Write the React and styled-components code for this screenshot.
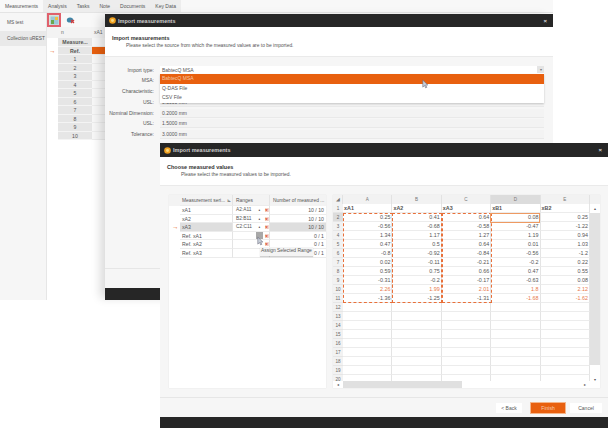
import React from 'react';
import styled, { createGlobalStyle } from 'styled-components';

const GlobalStyle = createGlobalStyle`
  html, body {
    margin: 0;
    padding: 0;
    background: #fff;
  }
  body {
    width: 608px;
    height: 428px;
    overflow: hidden;
    font-family: "Liberation Sans", Arial, sans-serif;
    color: #444;
  }
`;

const orange = '#e8600f';

const Desktop = styled.div`
  position: relative;
  width: 608px;
  height: 428px;
  overflow: hidden;
  background: #fff;
`;

/* ---------- main window ---------- */

const MainWindow = styled.div`
  position: absolute;
  left: 0;
  top: 0;
  width: 553px;
  height: 300px;
  display: flex;
  flex-direction: column;
  background: #f6f6f6;
`;

const TabBar = styled.div`
  height: 13px;
  flex: none;
  display: flex;
  background: #f8f8f8;
  border-bottom: 1px solid #e4e4e4;
  box-sizing: border-box;
`;

const TabGroup = styled.div`
  display: flex;
  background: #ededed;
`;

const Tab = styled.div`
  padding: 0 5px;
  font-size: 5px;
  line-height: 13px;
  color: #555;
  background: ${p => (p.$active ? '#f8f8f8' : 'transparent')};
  white-space: nowrap;
`;

const MainBody = styled.div`
  flex: 1;
  display: flex;
  min-height: 0;
`;

const Sidebar = styled.div`
  width: 46px;
  flex: none;
  padding-top: 2px;
  background: #f6f6f6;
  border-right: 1px solid #e6e6e6;
`;

const SideItem = styled.div`
  height: 15px;
  padding-left: 7px;
  font-size: 4.8px;
  line-height: 15px;
  color: #555;
  white-space: nowrap;
  background: ${p => (p.$active ? '#e9e9e9' : 'transparent')};
`;

const SideGap = styled.div`
  height: 1px;
`;

const Content = styled.div`
  flex: 1;
  display: flex;
  flex-direction: column;
  background: #fff;
`;

const ToolBar = styled.div`
  height: 14px;
  flex: none;
  display: flex;
  align-items: center;
  gap: 3px;
  background: #f8f8f8;
`;

const ToolButton = styled.div`
  width: 14px;
  height: 14px;
  display: flex;
  align-items: center;
  justify-content: center;
  box-sizing: border-box;
  border: ${p => (p.$marked ? '2px solid #e0606c' : '2px solid transparent')};
  background: ${p => (p.$marked ? '#d8e4dc' : 'transparent')};
`;

const SheetHead = styled.div`
  display: flex;
  height: 11px;
  padding-left: 14px;
  font-size: 5px;
  line-height: 11px;
  color: #666;
  background: #f3f3f3;
`;

const SheetCol = styled.div`
  width: ${p => p.$w}px;
  flex: none;
`;

const MiniTable = styled.div`
  display: flex;
  flex-direction: column;
  margin-left: 11px;
`;

const MiniRow = styled.div`
  display: flex;
  height: 8.5px;
  font-size: 5.2px;
  line-height: 8.5px;
  position: relative;
`;

const MiniLabel = styled.div`
  width: 34px;
  flex: none;
  text-align: center;
  font-weight: ${p => (p.$bold ? 700 : 400)};
  background: #e6e6e6;
  color: #555;
  border-bottom: 1px solid #f4f4f4;
  box-sizing: border-box;
`;

const MiniCell = styled.div`
  flex: 1;
  background: ${p => (p.$hot ? orange : '#f7f7f7')};
  border-bottom: 1px solid #ececec;
  box-sizing: border-box;
`;

const RowArrow = styled.span`
  position: absolute;
  left: ${p => p.$left}px;
  top: 50%;
  transform: translateY(-50%);
  font-size: 6.5px;
  font-weight: 700;
  line-height: 6px;
  color: ${orange};
`;

/* ---------- dialogs ---------- */

const Dialog = styled.div`
  position: absolute;
  left: ${p => p.$left}px;
  top: ${p => p.$top}px;
  width: 448px;
  height: ${p => p.$h}px;
  display: flex;
  flex-direction: column;
  box-sizing: border-box;
  background: #f6f6f6;
  box-shadow: ${p => (p.$soft ? '-7px 0 9px -2px rgba(0,0,0,.14)' : 'none')};
`;

const TitleBar = styled.div`
  height: ${p => p.$h}px;
  flex: none;
  display: flex;
  align-items: center;
  padding: 0 6px 0 4px;
  gap: 2px;
  background: #262626;
  color: #cfcfcf;
  font-size: 5.5px;
  font-weight: 700;
`;

const TitleText = styled.span`
  flex: 1;
`;

const CloseMark = styled.span`
  font-size: 6px;
  line-height: 6px;
  color: #ddd;
`;

const Banner = styled.div`
  height: ${p => p.$h}px;
  flex: none;
  box-sizing: border-box;
  padding: ${p => p.$pad}px 0 0 7px;
  background: #fff;
  border-bottom: 1px solid #eaeaea;
`;

const BannerTitle = styled.div`
  font-size: 5.5px;
  line-height: 7px;
  font-weight: 700;
  color: #333;
`;

const BannerText = styled.div`
  margin-left: 14px;
  font-size: 4.9px;
  line-height: 7px;
  color: #555;
`;

const Form = styled.div`
  display: grid;
  grid-template-columns: 49px 1fr;
  column-gap: 6px;
  row-gap: 1.75px;
  padding: 8.5px 9px 0 0;
  position: relative;
`;

const FormLabel = styled.div`
  height: 9px;
  text-align: right;
  font-size: 5px;
  line-height: 9px;
  color: #555;
  white-space: nowrap;
`;

const FormField = styled.div`
  height: 9px;
  box-sizing: border-box;
  padding-left: 2px;
  font-size: 5px;
  line-height: 9px;
  color: #555;
  background: ${p => (p.$white ? '#fff' : '#f3f3f3')};
  border-bottom: 1px solid #e9e9e9;
  display: flex;
  justify-content: space-between;
`;

const ComboArrow = styled.span`
  width: 7px;
  height: 7px;
  background: #e4e4e4;
  color: #777;
  font-size: 4px;
  line-height: 7px;
  text-align: center;
`;

const DropList = styled.div`
  position: absolute;
  left: 55px;
  right: 9px;
  top: 17px;
  background: #fff;
  box-shadow: 0 1px 2px rgba(0,0,0,.2);
  z-index: 2;
`;

const DropItem = styled.div`
  height: 9.6px;
  padding-left: 2px;
  font-size: 5px;
  line-height: 9.6px;
  background: ${p => (p.$on ? orange : '#fff')};
  color: ${p => (p.$on ? '#f3c9a8' : '#555')};
`;

const Pointer = styled.svg`
  position: absolute;
  left: ${p => p.$left}px;
  top: ${p => p.$top}px;
  z-index: 5;
`;

const Spacer = styled.div`
  flex: 1;
`;

const FootBar = styled.div`
  height: 20px;
  flex: none;
  box-sizing: border-box;
  display: flex;
  align-items: center;
  justify-content: flex-end;
  padding-right: 6px;
  border-top: 1px solid #e6e6e6;
`;

const BottomStrip = styled.div`
  height: ${p => p.$h}px;
  flex: none;
  background: #262626;
`;

const FootButton = styled.div`
  width: ${p => p.$w}px;
  height: 10px;
  margin-left: ${p => p.$gap}px;
  text-align: center;
  font-size: 5px;
  line-height: 10px;
  background: ${p => (p.$primary ? orange : '#fff')};
  color: ${p => (p.$primary ? '#f7cdb0' : '#555')};
  box-shadow: ${p => (p.$primary ? '0 0 0 1px #f4b58a' : 'none')};
`;

/* ---------- second dialog body ---------- */

const Panels = styled.div`
  flex: 1;
  display: flex;
  gap: 7px;
  padding: 9px 8px 9px 9px;
  min-height: 0;
`;

const SeriesPanel = styled.div`
  width: 157px;
  flex: none;
  background: #fff;
  position: relative;
  box-shadow: 0 0 1px #d8d8d8;
`;

const SeriesHead = styled.div`
  display: flex;
  height: 11px;
  background: #f3f3f3;
  font-size: 4.9px;
  line-height: 11px;
  color: #555;
`;

const SeriesRow = styled.div`
  display: flex;
  height: 8.6px;
  font-size: 5.2px;
  line-height: 8.6px;
  color: #555;
  box-sizing: border-box;
  position: relative;
`;

const Gutter = styled.div`
  width: 11px;
  flex: none;
`;

const NameCol = styled.div`
  width: 53px;
  flex: none;
  padding-left: 2px;
  box-sizing: border-box;
  white-space: nowrap;
  overflow: hidden;
  background: ${p => (p.$on ? '#dedede' : 'transparent')};
  border-bottom: 1px solid #ececec;
  border-right: 1px solid #e4e4e4;
`;

const RangeCol = styled.div`
  width: 37px;
  flex: none;
  display: flex;
  padding-left: 3px;
  box-sizing: border-box;
  border-bottom: 1px solid #ececec;
  border-right: 1px solid #e4e4e4;
  white-space: nowrap;
`;

const RangeText = styled.span`
  width: 20px;
  flex: none;
  font-size: 4.8px;
`;

const RangeAction = styled.span`
  width: 7px;
  flex: none;
  text-align: center;
  color: #555;
  font-size: 5px;
  background: ${p => (p.$hover ? '#a8a8a8' : 'transparent')};
`;

const RangeClear = styled.span`
  width: 4px;
  height: 4px;
  margin: 2px 0 0 1.5px;
  flex: none;
  text-align: center;
  font-size: 5px;
  font-weight: 700;
  line-height: 4px;
  color: #d9452b;
  background: #f6d9cc;
`;

const CountCol = styled.div`
  flex: 1;
  text-align: right;
  padding-right: 2px;
  white-space: nowrap;
  overflow: hidden;
  background: ${p => (p.$on ? '#dedede' : 'transparent')};
  border-bottom: ${p => (p.$head ? 'none' : '1px solid #ececec')};
`;

const HeadCount = styled.div`
  flex: 1;
  padding-left: 3px;
  white-space: nowrap;
  overflow: hidden;
`;

const Tooltip = styled.div`
  position: absolute;
  left: 91px;
  top: 52px;
  height: 9px;
  padding: 0 1px;
  background: #f4f4f4;
  box-shadow: 0 1px 1px rgba(0,0,0,.18);
  font-size: 4.9px;
  line-height: 8px;
  color: #555;
  white-space: nowrap;
  z-index: 3;
`;

const Sheet = styled.div`
  flex: 1;
  min-width: 0;
  background: #fff;
  position: relative;
  display: grid;
  grid-template-columns: 10px repeat(5, 49.4px) 1fr;
  grid-auto-rows: 9px;
  align-content: start;
  overflow: hidden;
  font-size: 5.4px;
  box-shadow: 0 0 1px #d8d8d8;
`;

const ColHead = styled.div`
  text-align: center;
  line-height: 9px;
  font-size: 4.6px;
  color: #777;
  background: ${p => (p.$on ? '#dcdcdc' : '#f2f2f2')};
  border-right: 1px solid #e2e2e2;
  box-sizing: border-box;
`;

const RowHead = styled.div`
  text-align: center;
  font-size: 4.6px;
  line-height: 9px;
  color: #666;
  background: ${p => (p.$on ? '#dcdcdc' : '#f2f2f2')};
  border-bottom: 1px solid #e6e6e6;
  box-sizing: border-box;
`;

const Cell = styled.div`
  padding: 0 1px;
  line-height: 9px;
  box-sizing: border-box;
  text-align: ${p => (p.$text ? 'left' : 'right')};
  font-weight: ${p => (p.$text ? 700 : 400)};
  color: ${p => (p.$hot ? '#e8784a' : '#555')};
  border-bottom: 1px solid #ececec;
  border-right: 1px solid #e4e4e4;
`;

const DashBox = styled.div`
  position: absolute;
  left: ${p => p.$left}px;
  top: 18px;
  width: 49.9px;
  height: 90px;
  box-sizing: border-box;
  border: 1px dashed #e8703a;
  pointer-events: none;
  z-index: 2;
`;

const CurrentCell = styled.div`
  position: absolute;
  left: 157.4px;
  top: 18px;
  width: 50px;
  height: 9.5px;
  box-sizing: border-box;
  border: 1px solid #ee9a62;
  z-index: 2;
`;

const ScrollV = styled.div`
  position: absolute;
  right: 0;
  top: 0;
  bottom: 0;
  width: 10px;
  background: #fff;
  display: flex;
  flex-direction: column;
  z-index: 3;
`;

const ScrollCap = styled.div`
  height: ${p => p.$h}px;
  flex: none;
  text-align: center;
  font-size: 4px;
  line-height: ${p => p.$line}px;
  color: #555;
  background: ${p => p.$bg};
`;

const ScrollTrackV = styled.div`
  flex: 1;
  background: #e2e2e2;
`;

const ScrollH = styled.div`
  position: absolute;
  left: 0;
  right: 10px;
  bottom: 0;
  height: 7px;
  display: flex;
  background: #fff;
  z-index: 3;
  font-size: 4px;
  line-height: 7px;
  color: #555;
`;

const ScrollEnd = styled.div`
  width: 10px;
  flex: none;
  text-align: center;
`;

const ScrollThumbH = styled.div`
  width: 119px;
  flex: none;
  background: #e0e0e0;
`;

const AppIcon = () => (
  <svg width="7" height="7" viewBox="0 0 8 8">
    <circle cx="4" cy="4" r="3.8" fill="#f0a020" />
    <circle cx="4" cy="4" r="1.7" fill="#f8d880" />
  </svg>
);

const ImportIcon = () => (
  <svg width="9" height="9" viewBox="0 0 9 9">
    <rect x=".5" y=".5" width="8" height="8" fill="#9cc7d8" />
    <rect x="1" y="4" width="3" height="4" fill="#6aa84f" />
    <rect x="5" y="1" width="3" height="3" fill="#f0c040" />
  </svg>
);

const DeleteIcon = () => (
  <svg width="10" height="9" viewBox="0 0 10 9">
    <ellipse cx="4" cy="4" rx="3.2" ry="2.6" fill="#3f86a8" />
    <path d="M5 4l3 3M8 4l-3 3" stroke="#d23b3b" strokeWidth="1.2" />
  </svg>
);

const Cursor = () => (
  <path d="M1 1v9l2.2-2 1.5 3 1.5-.7-1.5-3H7.5z" fill="#c9d0da" stroke="#667" strokeWidth=".7" />
);

const miniLabels = ['1', '2', '3', '4', '5', '6', '7', '8', '9', '10'];

const formRows = [
  ['MSA:', ''],
  ['Characteristic:', ''],
  ['USL:', '0.5000 mm'],
  ['Nominal Dimension:', '0.2000 mm'],
  ['USL:', '1.5000 mm'],
  ['Tolerance:', '3.0000 mm'],
];

const seriesRows = [
  { name: 'xA1', range: 'A2:A11', count: '10 / 10', dot: '•', clear: true },
  { name: 'xA2', range: 'B2:B11', count: '10 / 10', dot: '•', clear: true },
  { name: 'xA3', range: 'C2:C11', count: '10 / 10', dot: '•', clear: true, on: true },
  { name: 'Ref. xA1', range: '', count: '0 / 1', hover: true, clear: true },
  { name: 'Ref. xA2', range: '', count: '0 / 1', clear: true },
  { name: 'Ref. xA3', range: '', count: '0 / 1' },
];

const sheetHeads = ['xA1', 'xA2', 'xA3', 'xB1', 'xB2'];

const sheetRows = [
  ['0.25', '0.41', '0.64', '0.08', '0.25'],
  ['-0.56', '-0.68', '-0.58', '-0.47', '-1.22'],
  ['1.34', '1.17', '1.27', '1.19', '0.94'],
  ['0.47', '0.5', '0.64', '0.01', '1.03'],
  ['-0.8', '-0.92', '-0.84', '-0.56', '-1.2'],
  ['0.02', '-0.11', '-0.21', '-0.2', '0.22'],
  ['0.59', '0.75', '0.66', '0.47', '0.55'],
  ['-0.31', '-0.2', '-0.17', '-0.63', '0.08'],
  ['2.26', '1.99', '2.01', '1.8', '2.12'],
  ['-1.36', '-1.25', '-1.31', '-1.68', '-1.62'],
];

const emptyRows = [12, 13, 14, 15, 16, 17, 18, 19, 20];

const isHot = (r, c) => r === 8 || (r === 9 && c >= 3);

export default function App() {
  return (
    <Desktop>
      <GlobalStyle />

      <MainWindow>
        <TabBar>
          <TabGroup>
            <Tab $active>Measurements</Tab>
            <Tab>Analysis</Tab>
            <Tab>Tasks</Tab>
            <Tab>Note</Tab>
            <Tab>Documents</Tab>
            <Tab>Key Data</Tab>
          </TabGroup>
        </TabBar>
        <MainBody>
          <Sidebar>
            <SideItem>MS test</SideItem>
            <SideGap />
            <SideItem $active>Collection uREST</SideItem>
          </Sidebar>
          <Content>
            <ToolBar>
              <ToolButton $marked><ImportIcon /></ToolButton>
              <ToolButton><DeleteIcon /></ToolButton>
            </ToolBar>
            <SheetHead>
              <SheetCol $w={33}>n</SheetCol>
              <SheetCol $w={14}>xA1</SheetCol>
            </SheetHead>
            <MiniTable>
              <MiniRow>
                <MiniLabel $bold>Measure...</MiniLabel>
                <MiniCell />
              </MiniRow>
              <MiniRow>
                <RowArrow $left={-9}>→</RowArrow>
                <MiniLabel $bold>Ref.</MiniLabel>
                <MiniCell $hot />
              </MiniRow>
              {miniLabels.map(n => (
                <MiniRow key={n}>
                  <MiniLabel>{n}</MiniLabel>
                  <MiniCell />
                </MiniRow>
              ))}
            </MiniTable>
          </Content>
        </MainBody>
      </MainWindow>

      <Dialog $left={105} $top={14} $h={286} $soft>
        <TitleBar $h={13}>
          <AppIcon />
          <TitleText>Import measurements</TitleText>
          <CloseMark>×</CloseMark>
        </TitleBar>
        <Banner $h={30} $pad={8}>
          <BannerTitle>Import measurements</BannerTitle>
          <BannerText>Please select the source from which the measured values are to be imported.</BannerText>
        </Banner>
        <Form>
          <FormLabel>Import type:</FormLabel>
          <FormField $white>BabtecQ MSA<ComboArrow>▾</ComboArrow></FormField>
          {formRows.map(([label, value], i) => (
            <React.Fragment key={i}>
              <FormLabel>{label}</FormLabel>
              <FormField>{value}</FormField>
            </React.Fragment>
          ))}
          <DropList>
            <DropItem $on>BabtecQ MSA</DropItem>
            <DropItem>Q-DAS File</DropItem>
            <DropItem>CSV File</DropItem>
          </DropList>
        </Form>
        <Spacer />
        <FootBar />
        <BottomStrip $h={12} />
      </Dialog>

      <Pointer $left={422} $top={79} width="7" height="10" viewBox="0 0 9 12"><Cursor /></Pointer>

      <Dialog $left={160} $top={143} $h={285}>
        <TitleBar $h={14}>
          <AppIcon />
          <TitleText>Import measurements</TitleText>
          <CloseMark>×</CloseMark>
        </TitleBar>
        <Banner $h={29} $pad={7}>
          <BannerTitle>Choose measured values</BannerTitle>
          <BannerText>Please select the measured values to be imported.</BannerText>
        </Banner>
        <Panels>
          <SeriesPanel>
            <SeriesHead>
              <Gutter />
              <NameCol>Measurement seri... ⊾</NameCol>
              <RangeCol>Ranges</RangeCol>
              <HeadCount>Number of measured ...</HeadCount>
            </SeriesHead>
            {seriesRows.map(row => (
              <SeriesRow key={row.name}>
                {row.on && <RowArrow $left={3}>→</RowArrow>}
                <Gutter />
                <NameCol $on={row.on}>{row.name}</NameCol>
                <RangeCol>
                  <RangeText>{row.range}</RangeText>
                  <RangeAction $hover={row.hover}>{row.dot}</RangeAction>
                  {row.clear && <RangeClear>×</RangeClear>}
                </RangeCol>
                <CountCol $on={row.on}>{row.count}</CountCol>
              </SeriesRow>
            ))}
            <Tooltip>Assign Selected Range</Tooltip>
          </SeriesPanel>
          <Sheet>
            <ColHead>◢</ColHead>
            {['A', 'B', 'C', 'D', 'E'].map(c => (
              <ColHead key={c} $on={c === 'D'}>{c}</ColHead>
            ))}
            <ColHead />
            <RowHead>1</RowHead>
            {sheetHeads.map(h => <Cell key={h} $text>{h}</Cell>)}
            <Cell />
            {sheetRows.map((row, r) => (
              <React.Fragment key={r}>
                <RowHead $on={r === 0}>{r + 2}</RowHead>
                {row.map((v, c) => <Cell key={c} $hot={isHot(r, c)}>{v}</Cell>)}
                <Cell />
              </React.Fragment>
            ))}
            {emptyRows.map(n => (
              <React.Fragment key={n}>
                <RowHead>{n}</RowHead>
                {[0, 1, 2, 3, 4, 5].map(c => <Cell key={c} />)}
              </React.Fragment>
            ))}
            <DashBox $left={10} />
            <DashBox $left={59.4} />
            <DashBox $left={108.8} />
            <CurrentCell />
            <ScrollV>
              <ScrollCap $h={9} $line={9} $bg="#f2f2f2" />
              <ScrollCap $h={9} $line={9} $bg="#fff">▴</ScrollCap>
              <ScrollTrackV />
              <ScrollCap $h={23} $line={30} $bg="#fff">▾</ScrollCap>
            </ScrollV>
            <ScrollH>
              <ScrollEnd>◂</ScrollEnd>
              <ScrollThumbH />
              <Spacer />
              <ScrollEnd>▸</ScrollEnd>
            </ScrollH>
          </Sheet>
        </Panels>
        <FootBar>
          <FootButton $w={26} $gap={0}>&lt; Back</FootButton>
          <FootButton $w={34} $gap={9} $primary>Finish</FootButton>
          <FootButton $w={32} $gap={5}>Cancel</FootButton>
        </FootBar>
        <BottomStrip $h={11} />
      </Dialog>

      <Pointer $left={256.5} $top={236} width="7" height="10" viewBox="0 0 9 12"><Cursor /></Pointer>
    </Desktop>
  );
}
